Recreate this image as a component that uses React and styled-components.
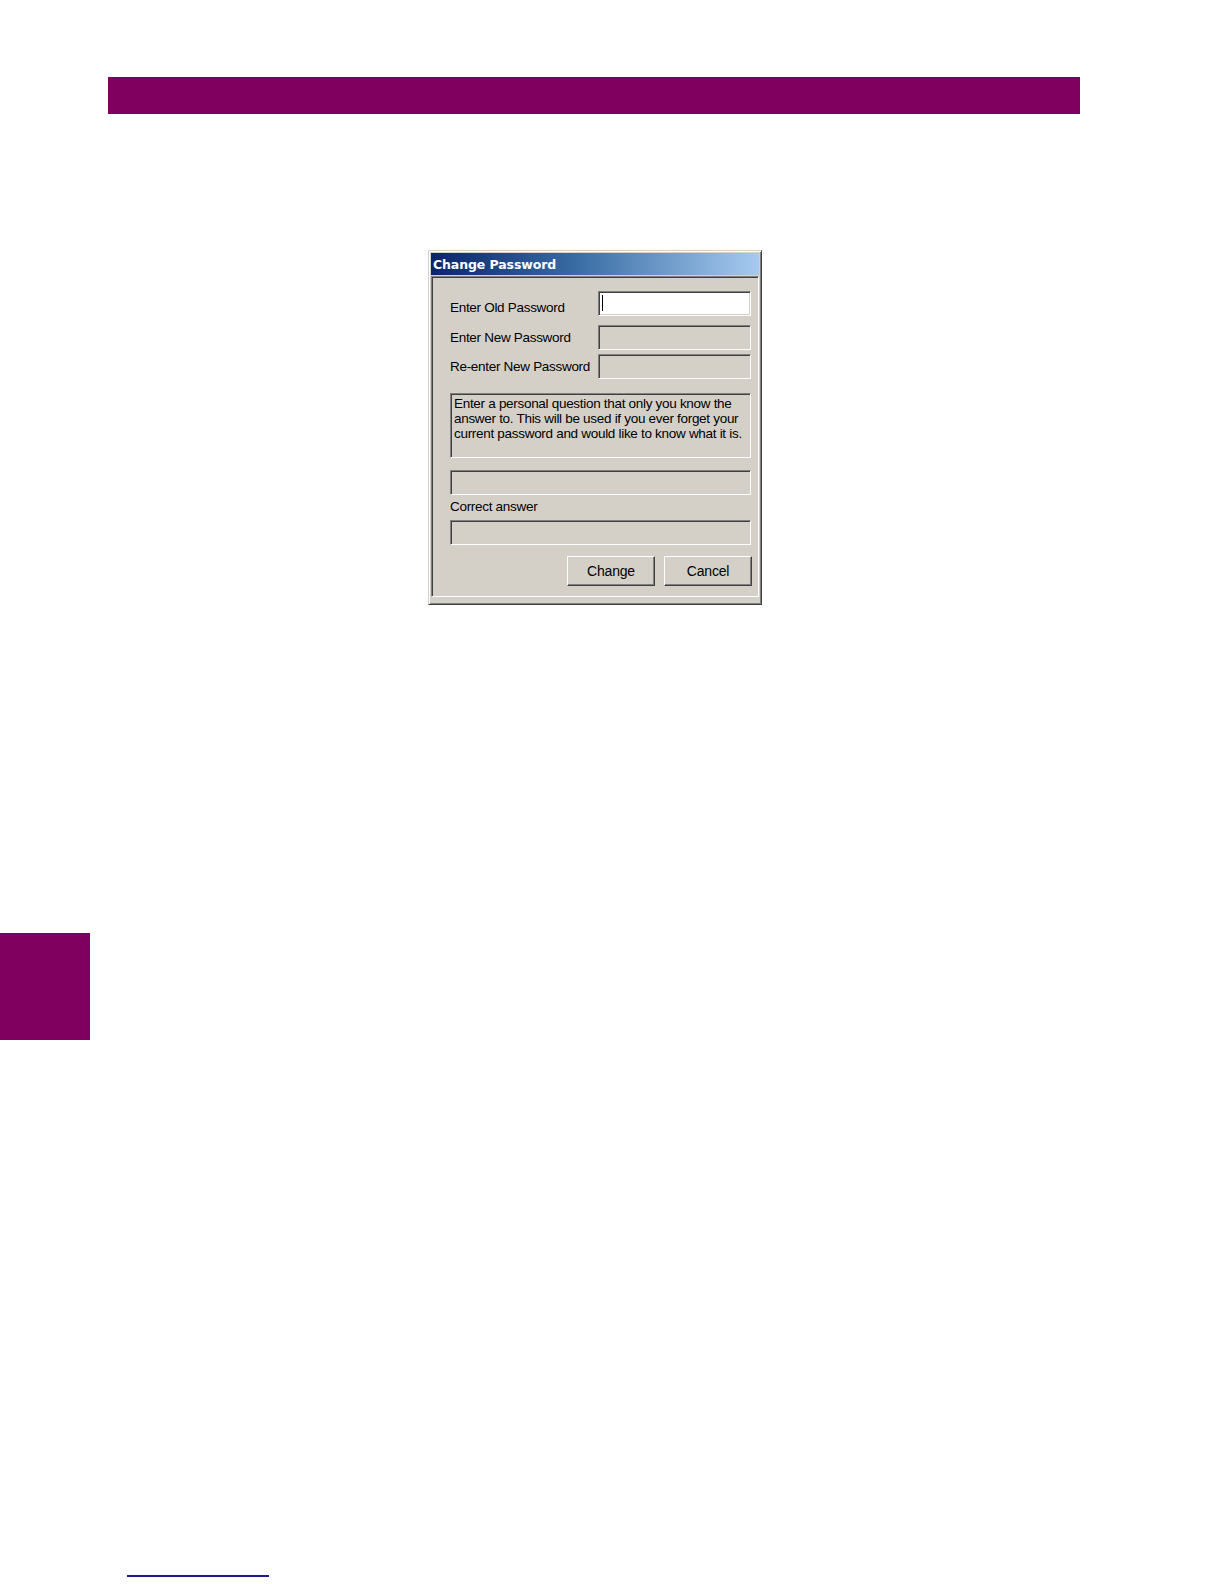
import React from "react";
import styled, { createGlobalStyle } from "styled-components";

const Global = createGlobalStyle`
  html, body { margin: 0; padding: 0; background: #ffffff; }
  body { font-family: "Liberation Sans", Arial, sans-serif; }
`;

const Page = styled.div`
  width: 1224px;
  height: 1584px;
  display: flex;
  flex-direction: column;
  align-items: flex-start;
  overflow: hidden;
`;

const HeaderBar = styled.div`
  margin-top: 77px;
  margin-left: 108px;
  width: 972px;
  height: 37px;
  background: #800060;
`;

const Dialog = styled.div`
  margin-top: 136px;
  margin-left: 428px;
  width: 334px;
  box-sizing: border-box;
  background: #d4d0c8;
  border-top: 1px solid #d4d0c8;
  border-left: 1px solid #d4d0c8;
  border-right: 1px solid #404040;
  border-bottom: 1px solid #404040;
  box-shadow: inset 1px 1px 0 #ffffff, inset -1px -1px 0 #808080;
  padding: 2px 2px 7px 2px;
  display: flex;
  flex-direction: column;
`;

const TitleBar = styled.div`
  height: 22px;
  display: flex;
  align-items: center;
  padding-left: 2px;
  background: linear-gradient(to right, #0a246a 0%, #3a6ea5 45%, #a6caf0 100%);
  color: #ffffff;
  font-family: "DejaVu Sans", "Liberation Sans", sans-serif;
  font-weight: bold;
  font-size: 12.5px;
  letter-spacing: -0.1px;
`;

const Client = styled.div`
  margin-top: 1px;
  border-top: 1px solid #808080;
  border-left: 1px solid #808080;
  border-right: 1px solid #ffffff;
  border-bottom: 1px solid #ffffff;
  box-shadow: inset 1px 1px 0 #404040, inset -1px -1px 0 #d4d0c8;
  padding: 14px 6px 10px 18px;
  display: flex;
  flex-direction: column;
`;

const FieldRow = styled.div`
  display: flex;
  align-items: center;
  justify-content: space-between;
  width: 301px;
  margin-top: ${(p) => p.$gap || 0}px;
`;

const Label = styled.span`
  font-size: 13.5px;
  color: #000;
  letter-spacing: -0.3px;
  white-space: nowrap;
  transform: translateY(${(p) => p.$shift || 0}px);
`;

const Field = styled.div`
  position: relative;
  box-sizing: border-box;
  width: ${(p) => p.$width || 153}px;
  height: 25px;
  background: ${(p) => (p.$active ? "#ffffff" : "#d4d0c8")};
  border-top: 1px solid #808080;
  border-left: 1px solid #808080;
  border-right: 1px solid #ffffff;
  border-bottom: 1px solid #ffffff;
  box-shadow: inset 1px 1px 0 #404040, inset -1px -1px 0 #d4d0c8;
  margin-top: ${(p) => p.$gap || 0}px;
`;

const Caret = styled.span`
  position: absolute;
  left: 3px;
  top: 3px;
  width: 1px;
  height: 16px;
  background: #000;
`;

const QuestionBox = styled.div`
  margin-top: 14px;
  box-sizing: border-box;
  width: 301px;
  height: 65px;
  padding: 2px 3px;
  border-top: 1px solid #808080;
  border-left: 1px solid #808080;
  border-right: 1px solid #ffffff;
  border-bottom: 1px solid #ffffff;
  box-shadow: inset 1px 1px 0 #404040, inset -1px -1px 0 #d4d0c8;
  font-size: 13.5px;
  line-height: 15px;
  letter-spacing: -0.3px;
  color: #000;
`;

const SmallLabel = styled.div`
  margin-top: 4px;
  height: 16px;
  line-height: 16px;
  font-size: 13.5px;
  letter-spacing: -0.3px;
  color: #000;
`;

const ButtonRow = styled.div`
  display: flex;
  justify-content: flex-end;
  gap: 9px;
  width: 302px;
  margin-top: 11px;
`;

const Button = styled.button`
  box-sizing: border-box;
  width: 88px;
  height: 30px;
  padding: 0;
  background: #d4d0c8;
  font-family: "Liberation Sans", Arial, sans-serif;
  font-size: 14px;
  letter-spacing: -0.2px;
  color: #000;
  border-top: 1px solid #ffffff;
  border-left: 1px solid #ffffff;
  border-right: 1px solid #404040;
  border-bottom: 1px solid #404040;
  box-shadow: inset -1px -1px 0 #808080;
`;

const SideTab = styled.div`
  margin-top: 328px;
  width: 90px;
  height: 107px;
  background: #800060;
`;

const FooterRule = styled.div`
  margin-top: 535px;
  margin-left: 127px;
  width: 142px;
  height: 2px;
  background: #1a1a8a;
`;

export default function App() {
  return (
    <>
      <Global />
      <Page>
        <HeaderBar />
        <Dialog>
          <TitleBar>Change Password</TitleBar>
          <Client>
            <FieldRow>
              <Label $shift={4}>Enter Old Password</Label>
              <Field $active>
                <Caret />
              </Field>
            </FieldRow>
            <FieldRow $gap={9}>
              <Label>Enter New Password</Label>
              <Field />
            </FieldRow>
            <FieldRow $gap={4}>
              <Label>Re-enter New Password</Label>
              <Field />
            </FieldRow>
            <QuestionBox>
              Enter a personal question that only you know the answer to. This will be used if you ever
              forget your current password and would like to know what it is.
            </QuestionBox>
            <Field $width={301} $gap={12} />
            <SmallLabel>Correct answer</SmallLabel>
            <Field $width={301} $gap={5} />
            <ButtonRow>
              <Button>Change</Button>
              <Button>Cancel</Button>
            </ButtonRow>
          </Client>
        </Dialog>
        <SideTab />
        <FooterRule />
      </Page>
    </>
  );
}
